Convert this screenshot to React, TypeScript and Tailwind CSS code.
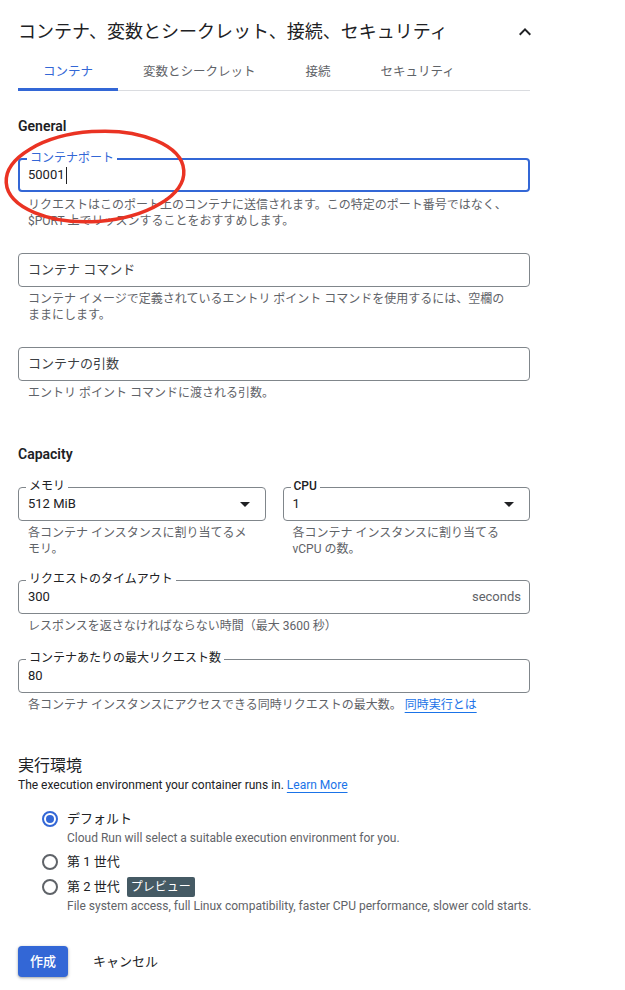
import React from "react";

function Helper({ children, className = "" }: { children: React.ReactNode; className?: string }) {
  return (
    <div className={`pl-[10px] mt-[4px] text-[12px] leading-[16px] text-[#5f6368] whitespace-nowrap ${className}`}>
      {children}
    </div>
  );
}

function FloatLabel({ children, className = "" }: { children: React.ReactNode; className?: string }) {
  return (
    <span
      className={`absolute left-[7px] top-[-9px] px-[3px] bg-white text-[12px] leading-[14px] whitespace-nowrap ${className}`}
    >
      {children}
    </span>
  );
}

function ArrowDrop() {
  return (
    <svg width="24" height="24" viewBox="0 0 24 24" className="shrink-0">
      <path d="M7 10l5 5 5-5z" fill="#202124" />
    </svg>
  );
}

function Radio({ checked }: { checked?: boolean }) {
  return (
    <span
      className={`w-[16px] h-[16px] rounded-full border-2 flex items-center justify-center shrink-0 ${
        checked ? "border-[#3367d6]" : "border-[#5f6368]"
      }`}
    >
      {checked && <span className="w-[8px] h-[8px] rounded-full bg-[#3367d6]" />}
    </span>
  );
}

export default function App() {
  return (
    <div className="relative w-[625px] h-[990px] bg-white text-[#202124] font-[Roboto,'Noto_Sans_CJK_JP',sans-serif] overflow-hidden">
      <div className="ml-[18px] w-[512px]">
        {/* Title */}
        <div className="mt-[20px] h-[24px] flex items-center justify-between">
          <h2 className="text-[18px] leading-[24px] font-normal">
            コンテナ、変数とシークレット、接続、セキュリティ
          </h2>
          <svg width="24" height="24" viewBox="0 0 24 24" className="-mr-[7px]">
            <path d="M12 8l-6 6 1.41 1.41L12 10.83l4.59 4.58L18 14z" fill="#202124" />
          </svg>
        </div>

        {/* Tabs */}
        <div className="mt-[11px] h-[36px] flex border-b border-[#dadce0] relative">
          <div className="relative px-[25px] flex items-center text-[12.5px] text-[#3367d6]">
            コンテナ
            <span className="absolute left-0 right-0 bottom-[-1px] h-[3px] bg-[#3367d6]" />
          </div>
          <div className="px-[25px] flex items-center text-[12.5px] text-[#5f6368]">変数とシークレット</div>
          <div className="px-[25px] flex items-center text-[12.5px] text-[#5f6368]">接続</div>
          <div className="px-[25px] flex items-center text-[12.5px] text-[#5f6368]">セキュリティ</div>
        </div>

        {/* General */}
        <div className="mt-[25px] text-[14px] leading-[20px] font-semibold">General</div>

        <div className="mt-[22px]">
          <div className="relative h-[34px] border-2 border-[#3367d6] rounded-[4px] pl-[8px] flex items-center text-[13px]">
            <FloatLabel className="text-[#3367d6] left-[6px]">コンテナポート</FloatLabel>
            <span>50001</span>
            <span className="ml-[1px] w-px h-[17px] bg-[#202124]" />
          </div>
          <Helper className="mt-[5px]">
            リクエストはこのポート上のコンテナに送信されます。この特定のポート番号ではなく、
            <br />
            $PORT 上でリッスンすることをおすすめします。
          </Helper>
        </div>

        <div className="mt-[24px]">
          <div className="h-[34px] border border-[#80868b] rounded-[4px] pl-[9px] flex items-center text-[13px] text-[#3c4043]">
            コンテナ コマンド
          </div>
          <Helper className="mt-[3px]">
            コンテナ イメージで定義されているエントリ ポイント コマンドを使用するには、空欄の
            <br />
            ままにします。
          </Helper>
        </div>

        <div className="mt-[24px]">
          <div className="h-[34px] border border-[#80868b] rounded-[4px] pl-[9px] flex items-center text-[13px] text-[#3c4043]">
            コンテナの引数
          </div>
          <Helper className="mt-[3px]">エントリ ポイント コマンドに渡される引数。</Helper>
        </div>

        {/* Capacity */}
        <div className="mt-[43px] text-[14px] leading-[20px] font-semibold">Capacity</div>

        <div className="mt-[23px] grid grid-cols-2 gap-[17px]">
          <div>
            <div className="relative h-[34px] border border-[#80868b] rounded-[4px] pl-[9px] pr-[8px] flex items-center justify-between text-[13px]">
              <FloatLabel>メモリ</FloatLabel>
              <span>512 MiB</span>
              <ArrowDrop />
            </div>
            <Helper className="mt-[3px]">
              各コンテナ インスタンスに割り当てるメ
              <br />
              モリ。
            </Helper>
          </div>
          <div>
            <div className="relative h-[34px] border border-[#80868b] rounded-[4px] pl-[9px] pr-[8px] flex items-center justify-between text-[13px]">
              <FloatLabel className="font-medium">CPU</FloatLabel>
              <span>1</span>
              <ArrowDrop />
            </div>
            <Helper className="mt-[3px]">
              各コンテナ インスタンスに割り当てる
              <br />
              vCPU の数。
            </Helper>
          </div>
        </div>

        <div className="mt-[23px]">
          <div className="relative h-[34px] border border-[#80868b] rounded-[4px] pl-[9px] pr-[8px] flex items-center justify-between text-[13px]">
            <FloatLabel>リクエストのタイムアウト</FloatLabel>
            <span>300</span>
            <span className="text-[#5f6368]">seconds</span>
          </div>
          <Helper className="mt-[3px]">レスポンスを返さなければならない時間（最大 3600 秒）</Helper>
        </div>

        <div className="mt-[25px]">
          <div className="relative h-[34px] border border-[#80868b] rounded-[4px] pl-[9px] flex items-center text-[13px]">
            <FloatLabel>コンテナあたりの最大リクエスト数</FloatLabel>
            <span>80</span>
          </div>
          <Helper className="mt-[3px]">
            各コンテナ インスタンスにアクセスできる同時リクエストの最大数。{" "}
            <span className="text-[#1a73e8] underline underline-offset-[3px]">同時実行とは</span>
          </Helper>
        </div>

        {/* Execution environment */}
        <div className="mt-[42px] text-[16px] leading-[22px]">実行環境</div>
        <div className="text-[12px] leading-[16px]">
          The execution environment your container runs in.{" "}
          <span className="text-[#1a73e8] underline underline-offset-[3px]">Learn More</span>
        </div>

        <div className="mt-[15px] pl-[24px]">
          <div className="h-[22px] flex items-center gap-[9px] text-[13px]">
            <Radio checked />
            <span>デフォルト</span>
          </div>
          <div className="pl-[25px] text-[12px] leading-[16px] text-[#5f6368]">
            Cloud Run will select a suitable execution environment for you.
          </div>

          <div className="mt-[5px] h-[22px] flex items-center gap-[9px] text-[13px]">
            <Radio />
            <span>第 1 世代</span>
          </div>

          <div className="mt-[3px] h-[22px] flex items-center gap-[9px] text-[13px]">
            <Radio />
            <span>第 2 世代</span>
            <span className="ml-[-2px] h-[20px] px-[4px] flex items-center bg-[#455a64] text-white text-[12px] rounded-[2px]">
              プレビュー
            </span>
          </div>
          <div className="pl-[25px] text-[12px] leading-[16px] text-[#5f6368] whitespace-nowrap">
            File system access, full Linux compatibility, faster CPU performance, slower cold starts.
          </div>
        </div>

        {/* Buttons */}
        <div className="mt-[32px] flex items-center gap-[25px]">
          <button className="h-[31px] w-[50px] rounded-[4px] bg-[#3367d6] text-white text-[13px] font-medium shadow-[0_1px_2px_rgba(60,64,67,0.3),0_1px_3px_1px_rgba(60,64,67,0.15)]">
            作成
          </button>
          <button className="text-[13px] text-[#202124]">キャンセル</button>
        </div>
      </div>

      {/* Red annotation ellipse */}
      <svg className="absolute left-0 top-0 pointer-events-none" width="625" height="990" viewBox="0 0 625 990">
        <ellipse
          cx="95"
          cy="176.5"
          rx="89"
          ry="45"
          transform="rotate(-4 95 176.5)"
          fill="none"
          stroke="#ea3323"
          strokeWidth="3.5"
        />
      </svg>
    </div>
  );
}
